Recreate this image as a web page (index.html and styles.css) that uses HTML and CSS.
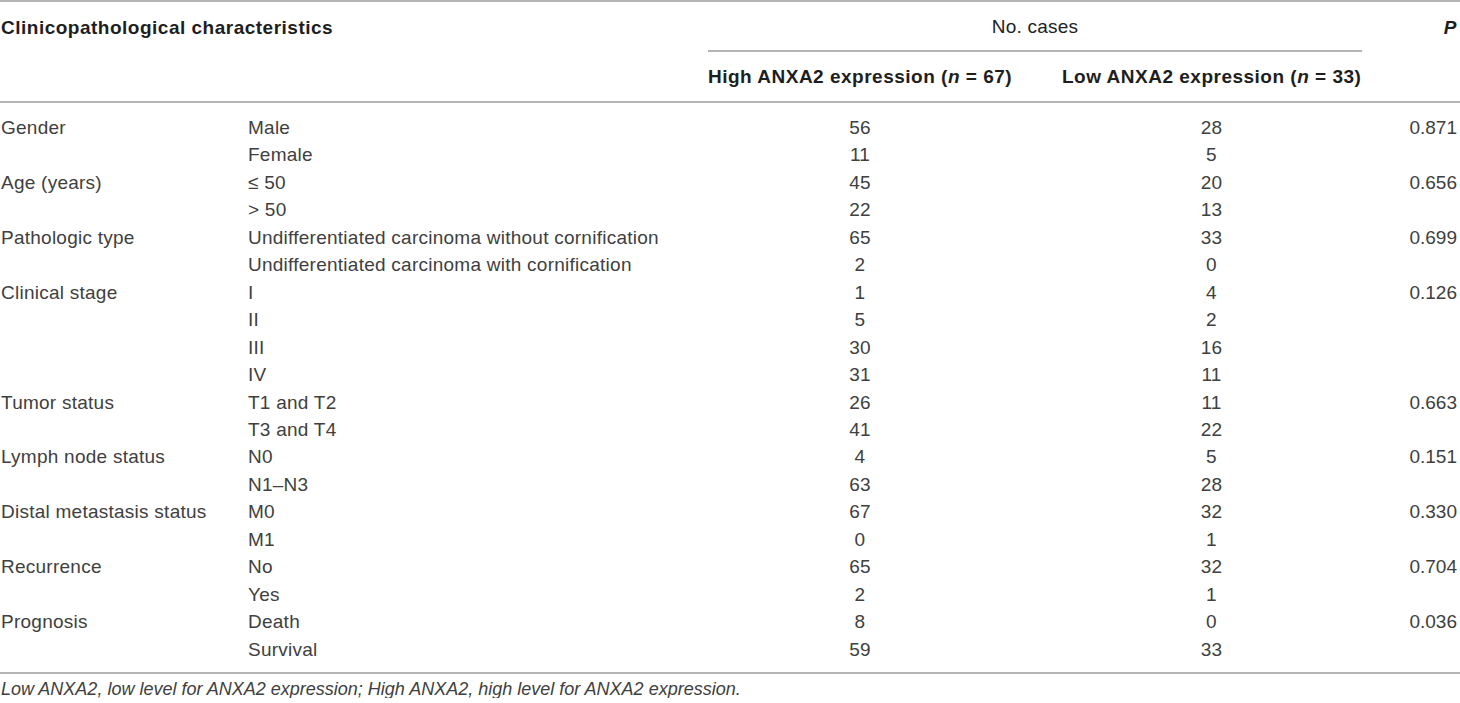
FILE: index.html
```html
<!DOCTYPE html>
<html lang="en">
<head>
<meta charset="utf-8">
<title>ANXA2 expression table</title>
<link rel="stylesheet" href="styles.css">
</head>
<body>
<div class="page">
<table class="data">
  <colgroup>
    <col class="c1"><col class="c2"><col class="c3"><col class="c4"><col class="c5">
  </colgroup>
  <thead>
    <tr class="h1">
      <th class="left" colspan="2">Clinicopathological characteristics</th>
      <th class="group" colspan="2"><div class="group-label">No. cases</div></th>
      <th class="pcol"><i>P</i></th>
    </tr>
    <tr class="h2">
      <th></th>
      <th></th>
      <th class="num hi">High ANXA2 expression (<i>n</i> = 67)</th>
      <th class="num lo">Low ANXA2 expression (<i>n</i> = 33)</th>
      <th></th>
    </tr>
  </thead>
  <tbody>
    <tr><td>Gender</td><td>Male</td><td class="num hi">56</td><td class="num lo">28</td><td class="pcol">0.871</td></tr>
    <tr><td></td><td>Female</td><td class="num hi">11</td><td class="num lo">5</td><td class="pcol"></td></tr>
    <tr><td>Age (years)</td><td>≤ 50</td><td class="num hi">45</td><td class="num lo">20</td><td class="pcol">0.656</td></tr>
    <tr><td></td><td>&gt; 50</td><td class="num hi">22</td><td class="num lo">13</td><td class="pcol"></td></tr>
    <tr><td>Pathologic type</td><td>Undifferentiated carcinoma without cornification</td><td class="num hi">65</td><td class="num lo">33</td><td class="pcol">0.699</td></tr>
    <tr><td></td><td>Undifferentiated carcinoma with cornification</td><td class="num hi">2</td><td class="num lo">0</td><td class="pcol"></td></tr>
    <tr><td>Clinical stage</td><td>I</td><td class="num hi">1</td><td class="num lo">4</td><td class="pcol">0.126</td></tr>
    <tr><td></td><td>II</td><td class="num hi">5</td><td class="num lo">2</td><td class="pcol"></td></tr>
    <tr><td></td><td>III</td><td class="num hi">30</td><td class="num lo">16</td><td class="pcol"></td></tr>
    <tr><td></td><td>IV</td><td class="num hi">31</td><td class="num lo">11</td><td class="pcol"></td></tr>
    <tr><td>Tumor status</td><td>T1 and T2</td><td class="num hi">26</td><td class="num lo">11</td><td class="pcol">0.663</td></tr>
    <tr><td></td><td>T3 and T4</td><td class="num hi">41</td><td class="num lo">22</td><td class="pcol"></td></tr>
    <tr><td>Lymph node status</td><td>N0</td><td class="num hi">4</td><td class="num lo">5</td><td class="pcol">0.151</td></tr>
    <tr><td></td><td>N1–N3</td><td class="num hi">63</td><td class="num lo">28</td><td class="pcol"></td></tr>
    <tr><td>Distal metastasis status</td><td>M0</td><td class="num hi">67</td><td class="num lo">32</td><td class="pcol">0.330</td></tr>
    <tr><td></td><td>M1</td><td class="num hi">0</td><td class="num lo">1</td><td class="pcol"></td></tr>
    <tr><td>Recurrence</td><td>No</td><td class="num hi">65</td><td class="num lo">32</td><td class="pcol">0.704</td></tr>
    <tr><td></td><td>Yes</td><td class="num hi">2</td><td class="num lo">1</td><td class="pcol"></td></tr>
    <tr><td>Prognosis</td><td>Death</td><td class="num hi">8</td><td class="num lo">0</td><td class="pcol">0.036</td></tr>
    <tr><td></td><td>Survival</td><td class="num hi">59</td><td class="num lo">33</td><td class="pcol"></td></tr>
  </tbody>
</table>
<p class="footnote">Low ANXA2, low level for ANXA2 expression; High ANXA2, high level for ANXA2 expression.</p>
</div>
</body>
</html>
```

FILE: styles.css
```css
html, body {
  margin: 0;
  padding: 0;
  background: #ffffff;
}

body {
  font-family: "Liberation Sans", Arial, sans-serif;
  font-size: 19px;
  color: #404040;
}

.page {
  width: 1460px;
}

.data {
  width: 1460px;
  border-collapse: collapse;
  table-layout: fixed;
  border-top: 2px solid #b4b4b4;
  border-bottom: 2px solid #b4b4b4;
}

.c1 { width: 248px; }
.c2 { width: 460px; }
.c3 { width: 329px; }
.c4 { width: 349px; }
.c5 { width: 74px; }

th, td {
  padding: 0;
  white-space: nowrap;
  text-align: left;
  vertical-align: middle;
}

td {
  letter-spacing: 0.25px;
}

th {
  color: #1e1e1e;
  font-weight: bold;
  letter-spacing: 0.5px;
}

.h1 th {
  height: 48px;
  padding-top: 1px;
}

.h1 th.left {
  padding-left: 1px;
}

.h1 th.group {
  padding: 0;
  height: 48px;
  vertical-align: top;
}

.group-label {
  height: 48px;
  line-height: 50px;
  margin-right: 24px;
  border-bottom: 2px solid #b4b4b4;
  text-align: center;
  font-weight: normal;
  letter-spacing: 0.2px;
  color: #222;
}

.h2 th {
  height: 49px;
  border-bottom: 2px solid #b4b4b4;
}

.num {
  text-align: center;
}

.hi {
  padding-right: 25px;
}

.lo {
  padding-left: 25px;
  padding-right: 25px;
}

.pcol {
  text-align: right;
  padding-right: 3px;
}

td.pcol {
  letter-spacing: 0;
}

th.pcol i {
  font-style: italic;
}

tbody td {
  line-height: 27.45px;
  height: 27.45px;
}

tbody tr:first-child td {
  padding-top: 11px;
}

tbody tr:last-child td {
  padding-bottom: 9px;
}

tbody td:first-child {
  padding-left: 1px;
}

.footnote {
  margin: 6px 0 0 0;
  padding-left: 1px;
  font-size: 18px;
  font-style: italic;
  line-height: 18px;
  color: #404040;
}
```
